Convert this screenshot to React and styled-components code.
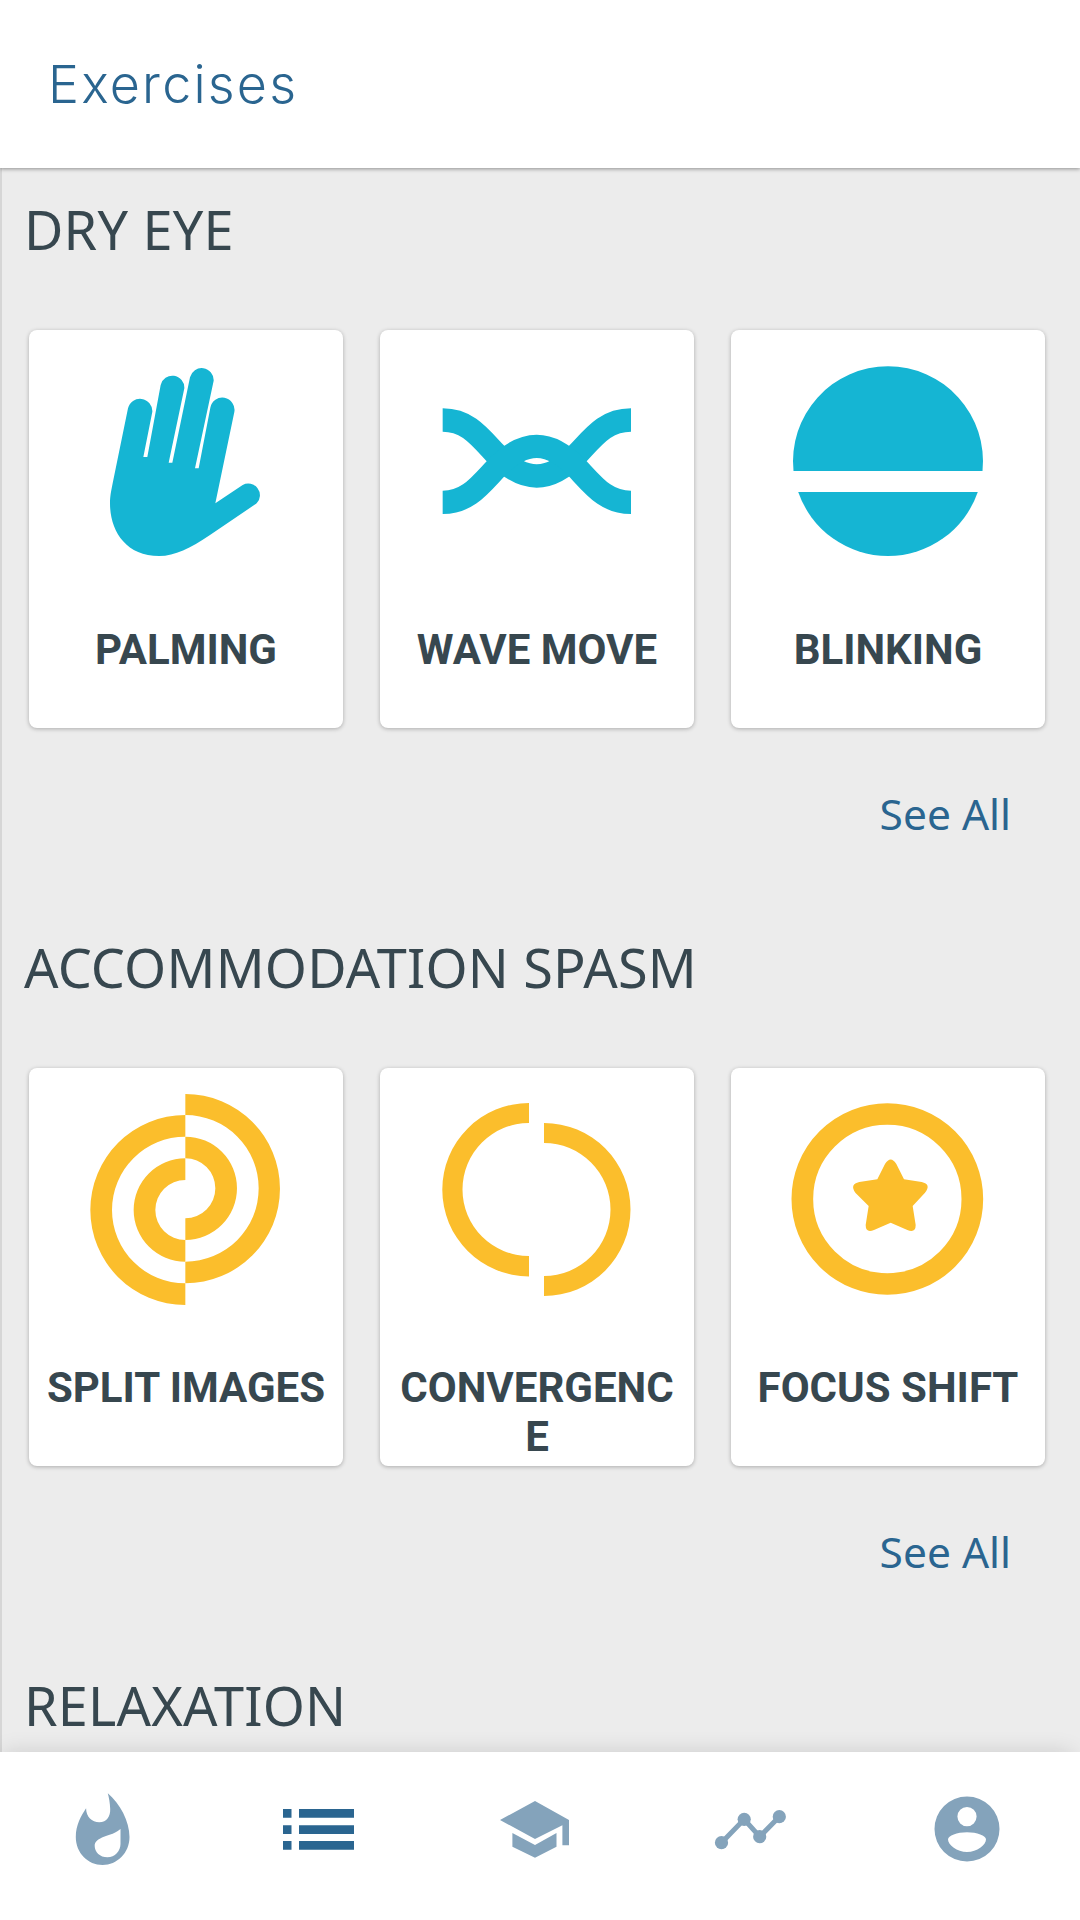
import React from "react";
import styled, { createGlobalStyle } from "styled-components";

const GlobalStyle = createGlobalStyle`
	html, body {
		margin: 0;
		padding: 0;
		background: #fff;
	}
`;

const Screen = styled.div`
	width: 1080px;
	height: 1920px;
	display: flex;
	flex-direction: column;
	overflow: hidden;
	background: #ececec;
`;

const Header = styled.header`
	position: relative;
	z-index: 2;
	flex: 0 0 168px;
	display: flex;
	align-items: center;
	padding-left: 48px;
	background: #fff;
	box-shadow: 0 1px 4px rgba(0, 0, 0, 0.4);
`;

const Title = styled.h1`
	margin: 0;
	font-family: Inter, sans-serif;
	font-weight: 300;
	font-size: 52px;
	letter-spacing: 2.2px;
	color: #2a6590;
`;

const Content = styled.main`
	flex: 1;
	min-height: 0;
	overflow: hidden;
	border-left: 2px solid #d6d6d6;
`;

const Section = styled.section`
	padding-top: 23px;
	padding-bottom: 64px;
`;

const Heading = styled.h2`
	margin: 0;
	padding-left: 22px;
	font-family: "Noto Sans", sans-serif;
	font-weight: 400;
	font-size: 54px;
	letter-spacing: 0.2px;
	line-height: 76px;
	color: #37474f;
`;

const CardRow = styled.div`
	display: grid;
	grid-template-columns: repeat(3, 314px);
	gap: 37px;
	margin-top: 63px;
	padding-left: 27px;
`;

const Card = styled.div`
	height: 398px;
	box-sizing: border-box;
	padding: 36px 14px 0;
	display: flex;
	flex-direction: column;
	align-items: center;
	background: #fff;
	border-radius: 8px;
	box-shadow: 0 1px 4px rgba(0, 0, 0, 0.28);
`;

const Art = styled.svg`
	flex: none;
	width: 190px;
	height: 190px;
	overflow: visible;
	fill: ${(p) => p.$tint};
`;

const Label = styled.div`
	margin-top: 69px;
	width: 100%;
	text-align: center;
	font-family: Roboto, sans-serif;
	font-weight: 700;
	font-size: 42px;
	line-height: 49px;
	color: #37474f;
	overflow-wrap: anywhere;
`;

const SeeAll = styled.a`
	display: block;
	margin-top: 58px;
	padding-right: 69px;
	text-align: right;
	font-family: "Noto Sans", sans-serif;
	font-size: 42.5px;
	line-height: 56px;
	color: #2a6590;
`;

const BottomNav = styled.nav`
	position: relative;
	z-index: 2;
	flex: 0 0 168px;
	display: grid;
	grid-template-columns: repeat(5, 216px);
	margin-left: -5px;
	padding-top: 37px;
	box-sizing: border-box;
	background: #fff;
	box-shadow: 0 -6px 22px -8px rgba(0, 0, 0, 0.16);
`;

const NavSlot = styled.div`
	display: flex;
	justify-content: center;
	height: 80px;
`;

const NavIcon = styled.svg`
	width: 80px;
	height: 80px;
	fill: ${(p) => (p.$active ? "#2a6590" : "#84a3bb")};
	stroke: none;
`;

const CYAN = "#15b5d3";
const YELLOW = "#fbbe2c";

const HandArt = () => (
	<Art viewBox="93 78 570 570" $tint={CYAN}>
		<path d="M158 430 L204 205 A37 37 0 0 1 277 215 L250 351 L262 351 L302 135 A36 36 0 0 1 373 145 L326 368 L337 368 L390 112 A36 36 0 0 1 461 122 L405 385 L416 385 L451 203 A36 36 0 0 1 523 216 L466 490 L548 435 A35 35 0 0 1 590 490 L450 585 C390 625 345 648 298 648 C195 648 150 570 150 490 C150 470 153 455 158 430 Z" />
	</Art>
);

const WaveArt = () => (
	<Art viewBox="66 -42 570 570" $tint={CYAN}>
		<g fill="none" stroke={CYAN} strokeWidth="70">
			<path d="M68 120 C140 120 175 165 225 219 C265 262 305 288 350 288 C395 288 435 262 475 219 C525 165 560 120 633 120" />
			<path d="M68 367 C140 367 175 322 225 268 C265 225 305 199 350 199 C395 199 435 225 475 268 C525 322 560 367 633 367" />
		</g>
	</Art>
);

const BlinkArt = () => (
	<Art viewBox="0 0 190 190" $tint={CYAN}>
		<path d="M0.5 105 A95 95 0 1 1 189.5 105 Z" />
		<path d="M5.2 126 H184.8 A95 95 0 0 1 5.2 126 Z" />
	</Art>
);

const SplitArt = () => (
	<Art viewBox="63 72 570 570" $tint={YELLOW}>
		<path d="M346 42 A284 284 0 0 1 346 610 V545 A220 220 0 0 0 346 105 Z" />
		<path d="M346 170 A155 155 0 0 1 346 480 V415 A90 90 0 0 0 346 235 Z" />
		<path d="M346 105 A285 285 0 0 0 346 675 V610 A220 220 0 0 1 346 170 Z" />
		<path d="M346 235 A155 155 0 0 0 346 545 V480 A90 90 0 0 1 346 300 Z" />
	</Art>
);

const ConvergeArt = () => (
	<Art viewBox="0 0 190 190" $tint={YELLOW}>
		<path d="M87 -1 A86.7 86.7 0 0 0 87 172.4 V152 A66.5 66.5 0 0 1 87 19 Z" />
		<path d="M102 19 A86.5 86.5 0 0 1 102 192 V172 A66.5 66.5 0 0 0 102 39 Z" />
	</Art>
);

const FocusArt = () => (
	<Art viewBox="69 42 570 570" $tint={YELLOW}>
		<circle cx="352" cy="327" r="255" fill="none" stroke={YELLOW} strokeWidth="65" />
		<path d="M345 222 Q362 195 379 222 L402 268 L455 276 Q485 283 465 308 L428 348 L437 405 Q437 430 412 420 L362 398 L312 420 Q287 430 287 405 L296 348 L256 308 Q238 283 268 276 L322 268 Z" />
	</Art>
);

const FlameIcon = () => (
	<NavIcon viewBox="-40 -40 80 80">
		<path
			fillRule="evenodd"
			d="M4.8 -35.7 C17 -25 26.5 -8 26.5 8 C26.5 24 14 36 -0.4 36 C-15 36 -27.2 24 -27.2 8 C-27.2 -4 -22 -13 -16.9 -20.7 C-17 -12 -11 -6.7 -3.8 -6.7 C4 -6.7 7.5 -13 7.2 -20 C7 -26 6 -31 4.8 -35.7 Z M17.5 0 C10 6 4 6 -1 8.5 C-6 11 -8.3 13 -8.3 17 C-8.3 23 -3 28.3 4.4 28.3 C12 28.3 17.5 22 17.5 15 Z"
		/>
	</NavIcon>
);

const ListIcon = () => (
	<NavIcon viewBox="-40 -40 80 80" $active>
		<path d="M-36 -20 h8.5 v8.7 h-8.5 Z M-20 -20 h55 v8.7 h-55 Z M-36 -3.8 h8.5 v8.7 h-8.5 Z M-20 -3.8 h55 v8.7 h-55 Z M-36 12 h8.5 v8.7 h-8.5 Z M-20 12 h55 v8.7 h-55 Z" />
	</NavIcon>
);

const CapIcon = () => (
	<NavIcon viewBox="-40 -40 80 80">
		<path d="M-35 -9 L0 -28 L34 -9 V16.3 H27.4 V-3.7 L0 10 Z" />
		<path d="M-22.6 4 V17.7 L0 28.7 L21.5 17.7 V4 L0 16 Z" />
	</NavIcon>
);

const ChartIcon = () => (
	<NavIcon viewBox="-40 -40 80 80">
		<path
			d="M-29.5 13.7 L-6.8 -9.7 L8.7 7.7 L28.3 -12.3"
			fill="none"
			stroke="#84a3bb"
			strokeWidth="5"
		/>
		<circle cx="-29.5" cy="13.7" r="6.6" />
		<circle cx="-6.8" cy="-9.7" r="6.6" />
		<circle cx="8.7" cy="7.7" r="6.6" />
		<circle cx="28.3" cy="-12.3" r="6.6" />
	</NavIcon>
);

const PersonIcon = () => (
	<NavIcon viewBox="-40 -40 80 80">
		<path
			fillRule="evenodd"
			d="M0 -32.5 A32.5 32.5 0 1 1 0 32.5 A32.5 32.5 0 1 1 0 -32.5 Z M0 -22 A9.6 9.6 0 1 0 0 -2.8 A9.6 9.6 0 1 0 0 -22 Z M0 3.2 C-10 3.2 -19 6.5 -19 10.5 C-19 16 -10 23 0 23 C10 23 19 16 19 10.5 C19 6.5 10 3.2 0 3.2 Z"
		/>
	</NavIcon>
);

const groups = [
	{
		title: "DRY EYE",
		items: [
			{ name: "PALMING", art: <HandArt /> },
			{ name: "WAVE MOVE", art: <WaveArt /> },
			{ name: "BLINKING", art: <BlinkArt /> },
		],
	},
	{
		title: "ACCOMMODATION SPASM",
		items: [
			{ name: "SPLIT IMAGES", art: <SplitArt /> },
			{ name: "CONVERGENCE", art: <ConvergeArt /> },
			{ name: "FOCUS SHIFT", art: <FocusArt /> },
		],
	},
	{ title: "RELAXATION", items: [] },
];

export default function App() {
	return (
		<Screen>
			<GlobalStyle />
			<Header>
				<Title>Exercises</Title>
			</Header>
			<Content>
				{groups.map((group) => (
					<Section key={group.title}>
						<Heading>{group.title}</Heading>
						{group.items.length > 0 && (
							<>
								<CardRow>
									{group.items.map((item) => (
										<Card key={item.name}>
											{item.art}
											<Label>{item.name}</Label>
										</Card>
									))}
								</CardRow>
								<SeeAll>See All</SeeAll>
							</>
						)}
					</Section>
				))}
			</Content>
			<BottomNav>
				<NavSlot><FlameIcon /></NavSlot>
				<NavSlot><ListIcon /></NavSlot>
				<NavSlot><CapIcon /></NavSlot>
				<NavSlot><ChartIcon /></NavSlot>
				<NavSlot><PersonIcon /></NavSlot>
			</BottomNav>
		</Screen>
	);
}
